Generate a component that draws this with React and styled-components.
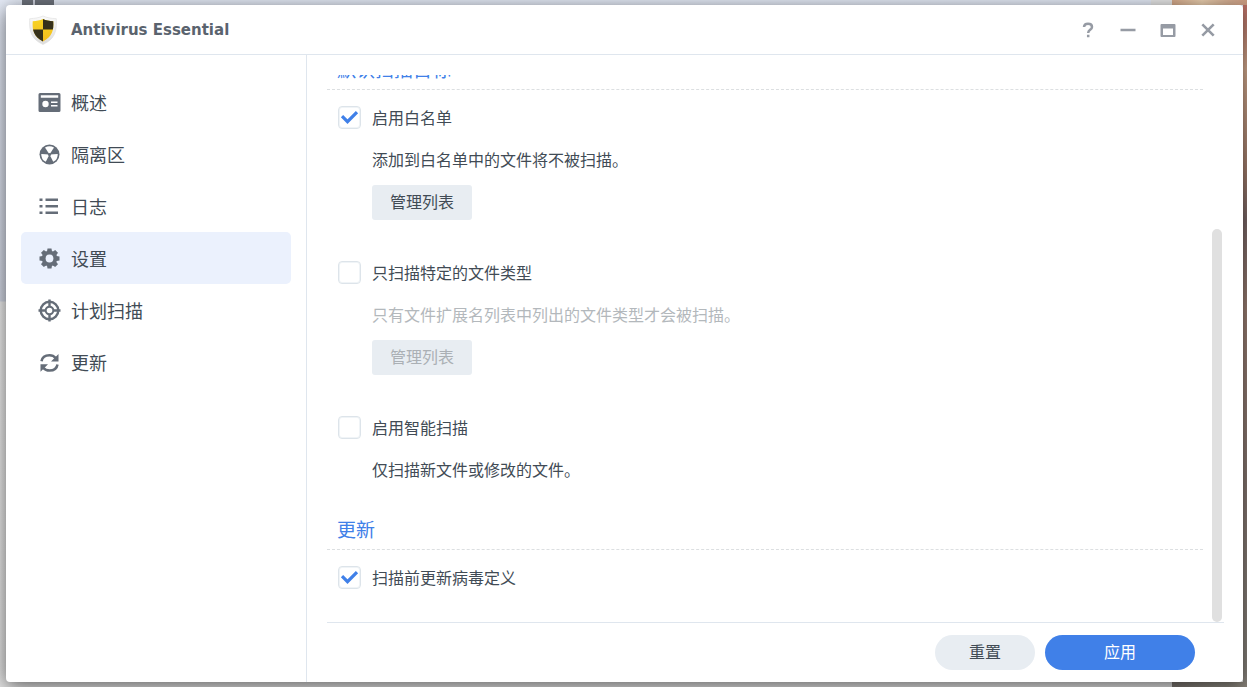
import React, { useLayoutEffect, useRef, useState } from 'react'
import styled, { createGlobalStyle, css } from 'styled-components'

const GlobalStyle = createGlobalStyle`
*{
    box-sizing:border-box;
}
body{
    margin:0;
    font-family:"Noto Sans CJK SC", "Liberation Sans", sans-serif;
    font-size:16px;
    color:#414b55;
}
button, input{
    font:inherit;
    color:inherit;
}
`
const Desktop = styled.div`
display:flex;
height:100vh;
padding:5px 4px 5px 6px;
background:
    linear-gradient(90deg, transparent 22px, #6f747e 22px, #6f747e 33px, #d0d4e0 33px, #d0d4e0 35px, #6f747e 35px, #6f747e 54px, transparent 54px) 0 0 / 100% 5px no-repeat,
    linear-gradient(90deg, #d5a98a, #ecd0b0 40%, #c99a80) right 0 top 0 / 75px 5px no-repeat,
    linear-gradient(90deg, #7c7670, #8d8980 60%, #8b857c) right 0 bottom 0 / 75px 5px no-repeat,
    linear-gradient(180deg, #b96a62, #d8ae92 10%, #a5806f 25%, #7d6a6a 32%, #9f8276 45%, #8a7a74 70%, #8b8780) right 0 top 0 / 4px 100% no-repeat,
    linear-gradient(90deg, transparent 1151px, #e8e8e8 1151px) 0 0 / 100% 5px no-repeat,
    linear-gradient(180deg, #e6ecf8, #d4d9e6 301px, #f0f0f0 302px, #e4e4e4);
`
const Window = styled.main`
flex:1;
min-width:0;
display:flex;
flex-direction:column;
background:#fff;
border-radius:4px;
box-shadow:0 4px 20px rgba(0, 0, 0, 0.6);
overflow:hidden;
`
const TitleBar = styled.header`
display:flex;
align-items:center;
flex:none;
height:50px;
padding:0 25px 0 21px;
border-bottom:1px solid #dfe6ee;
`
const Title = styled.h1`
flex:1;
margin:0 0 0 12px;
font:bold 15px/20px "DejaVu Sans", Verdana, sans-serif;
color:#5a636e;
`
const WindowButtons = styled.div`
display:flex;
gap:20px;
`
const WindowButton = styled.button`
display:flex;
align-items:center;
justify-content:center;
width:20px;
height:20px;
padding:0;
border:0;
background:none;
`
const Body = styled.div`
flex:1;
display:flex;
min-height:0;
`
const Sidebar = styled.nav`
flex:none;
width:301px;
padding:21px 15px;
border-right:1px solid #dfe6ee;
`
const NavItem = styled.a`
display:flex;
align-items:center;
gap:10px;
height:52px;
padding-left:17px;
border-radius:5px;
font-size:18px;
line-height:24px;
color:#414b55;
text-decoration:none;
${props => props.$active && css`background:#ebf1fd;`}
`
const Content = styled.section`
flex:1;
min-width:0;
display:flex;
flex-direction:column;
padding:20px 19px 0 20px;
`
const ScrollArea = styled.div`
flex:1;
min-height:0;
display:flex;
gap:9px;
padding-right:2px;
`
const ScrollView = styled.form`
flex:1;
min-width:0;
padding:169px 0 24px;
overflow-y:auto;
scrollbar-width:none;
`
const ScrollTrack = styled.div`
width:10px;
`
const ScrollThumb = styled.div`
border-radius:5px;
background:#e0e0e0;
`
const SectionTitle = styled.h2`
margin:21px 0 6px;
padding:0 0 2px 10px;
border-bottom:1px dashed #dcdfe1;
font-size:19px;
font-weight:normal;
line-height:36px;
color:#4080e8;
`
const Option = styled.div`
margin-bottom:${props => props.$spaced ? '31px' : '0'};
padding-left:11px;
`
const OptionLabel = styled.label`
display:flex;
align-items:center;
gap:11px;
height:42px;
`
const CheckBox = styled.input`
appearance:none;
width:23px;
height:23px;
margin:0;
border:1px solid #dde4ea;
border-radius:4px;
background:#fff;
box-shadow:inset 0 0 0 1px #f0f4f7;
&:checked{
    background:url("data:image/svg+xml,%3Csvg xmlns='http://www.w3.org/2000/svg' viewBox='0 0 21 21'%3E%3Cpath d='M3 9.2l5.500 5.500L18 5.200' fill='none' stroke='%234080e8' stroke-width='3.2'/%3E%3C/svg%3E") center / 21px 21px no-repeat;
}
`
const OptionDetail = styled.div`
padding-left:34px;
color:${props => props.$disabled ? '#b3b8bc' : 'inherit'};
`
const Description = styled.p`
margin:0;
line-height:42px;
`
const Button = styled.button`
height:35px;
width:${props => props.$wide ? '150px' : '100px'};
padding:0 0 3px;
border:0;
border-radius:${props => props.$round ? '18px' : '3px'};
background:${props => props.$primary ? '#4080e8' : '#e8edf2'};
color:${props => props.$primary ? '#fff' : '#414b55'};
line-height:24px;
&:disabled{
    color:#abb0b5;
}
`
const ListButton = styled(Button)`
display:block;
margin-top:5px;
`
const Footer = styled.footer`
display:flex;
justify-content:flex-end;
gap:10px;
flex:none;
height:60px;
padding:12px 29px 0 0;
border-top:1px solid #dfe6ee;
`

const Shield = () => (
    <svg width="32" height="32" viewBox="0 0 32 32" aria-hidden="true">
        <defs>
            <linearGradient id="rim" x1="0" y1="0" x2="0" y2="1">
                <stop offset="0" stopColor="#fafafa" />
                <stop offset="1" stopColor="#dcdcdc" />
            </linearGradient>
            <linearGradient id="gold" x1="0" y1="0" x2="0" y2="1">
                <stop offset="0" stopColor="#f9d824" />
                <stop offset="1" stopColor="#f2b91c" />
            </linearGradient>
            <clipPath id="plate">
                <path d="M16 5c3 1.500 6.500 2 10.300 2.200.500 9-.800 15-10.300 20.300C6.500 22.200 5.200 16.200 5.700 7.200 9.500 7 13 6.500 16 5z" />
            </clipPath>
        </defs>
        <path d="M16 2c4 1.800 8 2.400 13.300 2.700C30 17 28 25 16 30.500 4 25 2 17 2.700 4.700 8 4.400 12 3.800 16 2z" fill="url(#rim)" stroke="#dedede" strokeWidth=".6" />
        <g clipPath="url(#plate)">
            <path d="M0 0h32v32H0z" fill="url(#gold)" />
            <path d="M16 0h16v15.500H16zM0 15.500h16V32H0z" fill="#35301a" />
        </g>
    </svg>
)

const icons = {
    overview: <>
        <path fillRule="evenodd" d="M2 2h19a1.500 1.500 0 0 1 1.500 1.500v16A1.500 1.500 0 0 1 21 21H2a1.500 1.500 0 0 1-1.500-1.500v-16A1.500 1.500 0 0 1 2 2zM2.800 4.200v2.600h17.400V4.200z" />
        <g fill="#fff">
            <circle cx="7.500" cy="13" r="3.200" />
            <path d="M13 10.500h6.500V12H13zM13 14h6.500v1.500H13z" />
        </g>
    </>,
    quarantine: <>
        <circle cx="11.500" cy="11.500" r="10" />
        <g fill="#fff">
            <path d="M11.500 11.500L7 4.600a8.300 8.300 0 0 1 9 0z" />
            <path d="M11.500 11.500L7 4.600a8.300 8.300 0 0 1 9 0z" transform="rotate(120 11.500 11.500)" />
            <path d="M11.500 11.500L7 4.600a8.300 8.300 0 0 1 9 0z" transform="rotate(240 11.500 11.500)" />
        </g>
        <circle cx="11.500" cy="11.500" r="1.600" />
    </>,
    log: <path d="M1.500 3.500h3V6h-3zM7.500 3.500H20V6H7.500zM1.500 10h3v2.500h-3zM7.500 10H20v2.500H7.500zM1.500 16.500h3V19h-3zM7.500 16.500H20V19H7.500z" />,
    settings: <>
        {[0, 45, 90, 135].map(angle => (
            <path key={angle} d="M9.500 1.500h4l.500 3v14l-.500 3h-4l-.500-3v-14z" transform={`rotate(${angle} 11.500 11.500)`} />
        ))}
        <circle cx="11.500" cy="11.500" r="7.800" />
        <circle cx="11.500" cy="11.500" r="3.900" fill="#ebf1fd" />
    </>,
    schedule: <g fill="none" stroke="#656d78">
        <circle cx="11.500" cy="11.500" r="8.800" strokeWidth="2.400" />
        <circle cx="11.500" cy="11.500" r="3.800" strokeWidth="2" />
        <path d="M11.500 .500v7.500M11.500 15v7.500M.500 11.500H8M15 11.500h7.500" strokeWidth="2.400" />
    </g>,
    update: <>
        <path d="M3.500 10.300C4.200 6 7.700 4.200 11.500 4.200c2.800 0 4.700 1 6.300 2.900M19.500 13.500c-.700 4.300-4.200 6.100-8 6.100-2.800 0-4.700-1-6.300-2.900" fill="none" stroke="#656d78" strokeWidth="2.500" />
        <path d="M20.500 3v7.500H13zM2.500 20.800v-7.500H10z" />
    </>,
}

const NavIcon = ({ name }) => (
    <svg width="23" height="23" viewBox="0 0 23 23" fill="#656d78" aria-hidden="true">{icons[name]}</svg>
)

const navItems = [
    { id: 'overview', title: '概述' },
    { id: 'quarantine', title: '隔离区' },
    { id: 'log', title: '日志' },
    { id: 'settings', title: '设置' },
    { id: 'schedule', title: '计划扫描' },
    { id: 'update', title: '更新' },
]

const windowButtons = [
    { label: 'Help', icon: <path d="M6 7C6.200 4.800 7.800 3.700 10 3.700c2.400 0 4 1.200 4 3.200 0 2.900-3.800 3-3.800 6M10.200 14.800v2.500" fill="none" stroke="#969ba4" strokeWidth="2.500" /> },
    { label: 'Minimize', icon: <path d="M2.500 8.800h15v2.400h-15z" /> },
    { label: 'Maximize', icon: <path fillRule="evenodd" d="M3.500 4h13a1 1 0 0 1 1 1v11a1 1 0 0 1-1 1h-13a1 1 0 0 1-1-1V5a1 1 0 0 1 1-1zM5 8.500V15h10V8.500z" /> },
    { label: 'Close', icon: <path d="M4.300 4.300l11.400 11.400M15.700 4.300L4.300 15.700" stroke="#969ba4" strokeWidth="2.600" /> },
]

const CheckOption = ({ label, text, checked, button, disabled, spaced }) => {
    const [on, setOn] = useState(Boolean(checked))
    return (
        <Option $spaced={spaced}>
            <OptionLabel>
                <CheckBox type="checkbox" checked={on} onChange={e => setOn(e.target.checked)} />
                {label}
            </OptionLabel>
            {text && (
                <OptionDetail $disabled={disabled}>
                    <Description>{text}</Description>
                    {button && <ListButton type="button" disabled={disabled}>{button}</ListButton>}
                </OptionDetail>
            )}
        </Option>
    )
}

export default function App() {
    const view = useRef(null)
    const [thumb, setThumb] = useState({ top: 0, height: 0 })

    const updateThumb = () => {
        const { scrollTop, scrollHeight, clientHeight } = view.current
        const ratio = clientHeight / scrollHeight
        setThumb({ top: scrollTop * ratio, height: clientHeight * ratio })
    }

    useLayoutEffect(() => {
        view.current.scrollTop = view.current.scrollHeight
        updateThumb()
        window.addEventListener('resize', updateThumb)
        return () => window.removeEventListener('resize', updateThumb)
    }, [])

    return (
        <Desktop>
            <GlobalStyle />
            <Window>
                <TitleBar>
                    <Shield />
                    <Title>Antivirus Essential</Title>
                    <WindowButtons>
                        {windowButtons.map(({ label, icon }) => (
                            <WindowButton key={label} type="button" aria-label={label}>
                                <svg width="20" height="20" viewBox="0 0 20 20" fill="#969ba4">{icon}</svg>
                            </WindowButton>
                        ))}
                    </WindowButtons>
                </TitleBar>
                <Body>
                    <Sidebar>
                        {navItems.map(({ id, title }) => (
                            <NavItem key={id} href={`#${id}`} $active={id === 'settings'}>
                                <NavIcon name={id} />
                                {title}
                            </NavItem>
                        ))}
                    </Sidebar>
                    <Content>
                        <ScrollArea>
                            <ScrollView id="settings-form" ref={view} onScroll={updateThumb}>
                                <SectionTitle>默认扫描目标</SectionTitle>
                                <CheckOption spaced checked label="启用白名单" text="添加到白名单中的文件将不被扫描。" button="管理列表" />
                                <CheckOption spaced disabled label="只扫描特定的文件类型" text="只有文件扩展名列表中列出的文件类型才会被扫描。" button="管理列表" />
                                <CheckOption label="启用智能扫描" text="仅扫描新文件或修改的文件。" />
                                <SectionTitle>更新</SectionTitle>
                                <CheckOption checked label="扫描前更新病毒定义" />
                            </ScrollView>
                            <ScrollTrack>
                                <ScrollThumb style={{ height: thumb.height, marginTop: thumb.top }} />
                            </ScrollTrack>
                        </ScrollArea>
                        <Footer>
                            <Button $round type="reset" form="settings-form">重置</Button>
                            <Button $round $wide $primary type="button">应用</Button>
                        </Footer>
                    </Content>
                </Body>
            </Window>
        </Desktop>
    )
}
